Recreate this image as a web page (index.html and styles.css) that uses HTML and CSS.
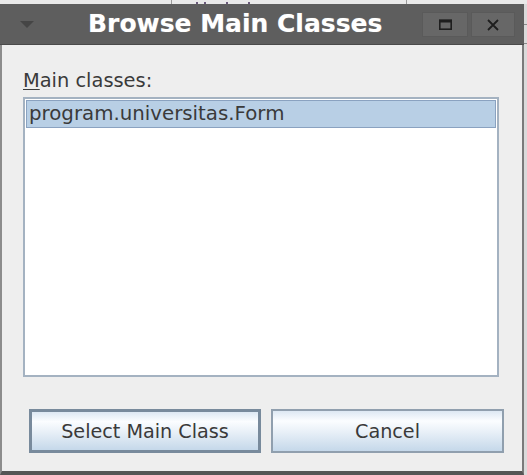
FILE: index.html
```html
<!DOCTYPE html>
<html>
<head>
<meta charset="utf-8">
<link rel="stylesheet" href="styles.css">
</head>
<body>
<div class="screen">
  <div class="behind-top">
    <span class="bline bline-a"></span>
    <span class="bdots">
      <span class="dot"></span><span class="dot"></span><span class="dot dot-gap"></span><span class="dot dot-gap"></span>
    </span>
    <span class="bline bline-b"></span>
  </div>
  <div class="row">
    <div class="window">
      <div class="titlebar">
        <div class="menu-btn">
          <svg width="14" height="7" viewBox="0 0 14 7"><polygon points="0,0 14,0 7,7" fill="#454545"/></svg>
        </div>
        <div class="title">Browse Main Classes</div>
        <div class="spacer"></div>
        <div class="wbtn wbtn-max">
          <svg width="13" height="11" viewBox="0 0 13 11"><rect x="0.8" y="1.5" width="11.4" height="8.7" fill="none" stroke="#1e1e1e" stroke-width="1.6"/><rect x="0" y="0.5" width="13" height="3" fill="#1e1e1e"/></svg>
        </div>
        <div class="wbtn wbtn-close">
          <svg width="12" height="12" viewBox="0 0 12 12"><path d="M1 1 L11 11 M11 1 L1 11" stroke="#1e1e1e" stroke-width="1.8" fill="none"/></svg>
        </div>
      </div>
      <div class="content">
        <div class="label"><span class="mn">M</span>ain classes:</div>
        <div class="list">
          <div class="item selected">program.universitas.Form</div>
        </div>
        <div class="buttons">
          <button class="btn btn-default">Select Main Class</button>
          <button class="btn">Cancel</button>
        </div>
      </div>
    </div>
    <div class="behind-right">
      <span class="hline hl-a"></span>
      <span class="hline hl-b"></span>
    </div>
  </div>
</div>
</body>
</html>
```
FILE: styles.css
```css
html, body {
  margin: 0;
  padding: 0;
  background: #e2e2e2;
}
body {
  width: 527px;
  height: 475px;
  overflow: hidden;
  font-family: "DejaVu Sans", sans-serif;
}
.screen {
  display: flex;
  flex-direction: column;
  width: 527px;
}
.behind-top {
  height: 4px;
  background: #e9e9e9;
  display: flex;
  align-items: stretch;
  overflow: hidden;
}
.bline {
  width: 1px;
  background: #9a9a9a;
}
.bline-a { margin-left: 171px; }
.bline-b { margin-left: 150px; }
.bdots {
  display: flex;
  align-items: flex-end;
  gap: 6px;
  margin-left: 24px;
  width: 60px;
}
.dot {
  width: 2px;
  height: 2px;
  background: #6a5a7a;
}
.dot-gap { margin-left: 14px; }
.row {
  display: flex;
}
.window {
  width: 524px;
  height: 471px;
  display: flex;
  flex-direction: column;
}
.behind-right {
  width: 3px;
  background: #dadada;
  display: flex;
  flex-direction: column;
}
.hline {
  height: 1px;
  background: #8a8a8a;
}
.hl-a { margin-top: 20px; }
.hl-b { margin-top: 18px; }

.titlebar {
  height: 40px;
  background: #5e5e5e;
  border-bottom: 1px solid #4a4a4a;
  display: flex;
  align-items: center;
}
.menu-btn {
  width: 54px;
  display: flex;
  justify-content: center;
  padding-top: 1px;
}
.title {
  margin-left: 34px;
  font-family: "DejaVu Sans", sans-serif;
  font-weight: bold;
  font-size: 25px;
  line-height: 40px;
  color: #ffffff;
  text-shadow: 0 0 1px rgba(255,255,255,0.4);
  padding-bottom: 1px;
}
.spacer { flex: 1; }
.wbtn {
  height: 25px;
  margin-top: 1px;
  background: #676767;
  border: 1px solid #5a5a5a;
  box-sizing: border-box;
  display: flex;
  align-items: center;
  justify-content: center;
}
.wbtn-max { width: 46px; }
.wbtn-close { width: 44px; margin-left: 3px; margin-right: 9px; }

.content {
  flex: 1;
  background: #eeeeee;
  border-left: 2px solid #8c8c8c;
  border-right: 2px solid #7a7a7a;
  border-bottom: 4px solid #555555;
  padding: 24px 0 0 21px;
  display: flex;
  flex-direction: column;
}
.label {
  font-size: 19.4px;
  line-height: 23px;
  color: #3a3a3a;
  height: 23px;
}
.mn {
  text-decoration: underline;
  text-underline-offset: 2px;
}
.list {
  margin-top: 5px;
  width: 476px;
  height: 280px;
  box-sizing: border-box;
  background: #ffffff;
  border: 2px solid #a4b2c1;
  padding: 1px;
}
.item {
  height: 28px;
  box-sizing: border-box;
  font-size: 19.8px;
  line-height: 26px;
  padding-left: 2px;
  color: #3a3a3a;
}
.item.selected {
  background: #b8cfe5;
  border: 1px solid #8aa2c0;
}
.buttons {
  margin-top: 32px;
  margin-left: 6px;
  display: flex;
  gap: 10px;
}
.btn {
  width: 233px;
  height: 44px;
  box-sizing: border-box;
  margin: 0;
  padding: 0;
  font-family: "DejaVu Sans", sans-serif;
  font-size: 19.2px;
  color: #3a3a3a;
  border: 2px solid #909fae;
  background: linear-gradient(to bottom, #dde8f3 0%, #fbfdff 25%, #eaf1f8 50%, #c5d8ea 100%);
}
.btn-default {
  width: 232px;
  border: 3px solid #788a9c;
}
```
